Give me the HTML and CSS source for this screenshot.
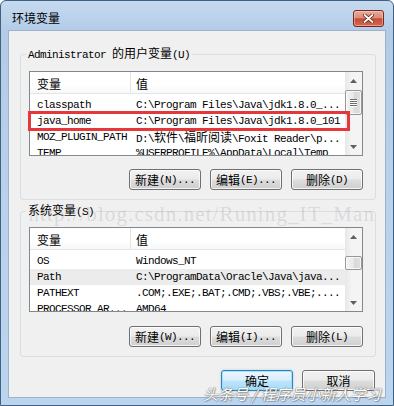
FILE: index.html
```html
<!DOCTYPE html>
<html>
<head>
<meta charset="utf-8">
<link rel="stylesheet" href="styles.css">
</head>
<body>
<div class="window">
  <div class="titlebar">
    <span class="title">环境变量</span>
    <div class="close">
      <svg width="11" height="9" viewBox="0 0 11 9">
        <path d="M1.5 1 L9.5 8 M9.5 1 L1.5 8" stroke="#5b2016" stroke-width="3.4" stroke-linecap="round"/>
        <path d="M1.5 1 L9.5 8 M9.5 1 L1.5 8" stroke="#ffffff" stroke-width="1.8" stroke-linecap="round"/>
      </svg>
    </div>
  </div>
  <div class="client">
    <fieldset class="group g1">
      <legend><span class="m">Administrator </span>的用户变量<span class="m">(U)</span></legend>
      <div class="list">
        <div class="grid">
          <div class="head"><div class="hc h1">变量</div><div class="hc h2">值</div></div>
          <div class="rows">
            <div class="row"><div class="c1">classpath</div><div class="c2">C:\Program Files\Java\jdk1.8.0_...</div></div>
            <div class="row"><div class="c1">java_home</div><div class="c2">C:\Program Files\Java\jdk1.8.0_101</div></div>
            <div class="row"><div class="c1">MOZ_PLUGIN_PATH</div><div class="c2">D:\<span class="cj">软件</span>\<span class="cj">福昕阅读</span>\Foxit Reader\p...</div></div>
            <div class="row"><div class="c1">TEMP</div><div class="c2">%USERPROFILE%\AppData\Local\Temp</div></div>
          </div>
        </div>
        <div class="sb">
          <div class="arr"><svg width="7" height="4" viewBox="0 0 7 4"><path d="M0 4 L3.5 0 L7 4Z" fill="#606060"/></svg></div>
          <div class="track">
            <div class="thumb t1">
              <svg width="7" height="8" viewBox="0 0 7 8"><path d="M0 0.5H7M0 2.5H7M0 4.5H7M0 6.5H7" stroke="#6e6e6e" stroke-width="1"/><path d="M0 1.5H7M0 3.5H7M0 5.5H7M0 7.5H7" stroke="#fbfbfb" stroke-width="1"/></svg>
            </div>
          </div>
          <div class="arr"><svg width="7" height="4" viewBox="0 0 7 4"><path d="M0 0 L3.5 4 L7 0Z" fill="#606060"/></svg></div>
        </div>
      </div>
      <div class="btns">
        <div class="btn">新建<span class="m">(N)...</span></div>
        <div class="btn">编辑<span class="m">(E)...</span></div>
        <div class="btn">删除<span class="m">(D)</span></div>
      </div>
    </fieldset>

    <fieldset class="group g2">
      <legend>系统变量<span class="m">(S)</span></legend>
      <div class="list">
        <div class="grid">
          <div class="head"><div class="hc h1">变量</div><div class="hc h2">值</div></div>
          <div class="rows">
            <div class="row"><div class="c1">OS</div><div class="c2">Windows_NT</div></div>
            <div class="row sel"><div class="c1">Path</div><div class="c2">C:\ProgramData\Oracle\Java\java...</div></div>
            <div class="row"><div class="c1">PATHEXT</div><div class="c2">.COM;.EXE;.BAT;.CMD;.VBS;.VBE;....</div></div>
            <div class="row"><div class="c1">PROCESSOR_AR...</div><div class="c2">AMD64</div></div>
          </div>
        </div>
        <div class="sb">
          <div class="arr"><svg width="7" height="4" viewBox="0 0 7 4"><path d="M0 4 L3.5 0 L7 4Z" fill="#606060"/></svg></div>
          <div class="track">
            <div class="thumb t2"></div>
          </div>
          <div class="arr"><svg width="7" height="4" viewBox="0 0 7 4"><path d="M0 0 L3.5 4 L7 0Z" fill="#606060"/></svg></div>
        </div>
      </div>
      <div class="btns b2">
        <div class="btn">新建<span class="m">(W)...</span></div>
        <div class="btn">编辑<span class="m">(I)...</span></div>
        <div class="btn">删除<span class="m">(L)</span></div>
      </div>
    </fieldset>

    <div class="dlg">
      <div class="btn default">确定</div>
      <div class="btn cancel">取消</div>
    </div>
  </div>

  <div class="redbox"></div>
  <div class="wm1">http://blog.csdn.net/Runing_IT_Man</div>
  <div class="wm2">头条号 / 程序员小新人学习</div>
</div>
</body>
</html>
```

FILE: styles.css
```css
* { box-sizing: border-box; }

body {
  margin: 0;
  background: #ffffff;
}

.window {
  position: relative;
  width: 394px;
  height: 406px;
  display: flex;
  flex-direction: column;
  padding: 0 7px 7px;
  border: 1px solid #3f6186;
  border-radius: 6px 6px 0 0;
  background: linear-gradient(180deg, #c6daef 0, #b3cbe7 30px, #b9d1ec 200px, #bcd5ef 100%);
  font-family: "Noto Sans CJK SC", sans-serif;
  font-size: 12px;
  color: #000;
  overflow: hidden;
}

.titlebar {
  height: 29px;
  display: flex;
  align-items: flex-start;
}

.title {
  padding: 9px 0 0 4px;
  line-height: 16px;
  font-size: 12px;
}

.close {
  margin: 9px 2px 0 auto;
  width: 31px;
  height: 17px;
  border: 1px solid #74291e;
  border-radius: 3px;
  background: linear-gradient(180deg, #eaab9d 0%, #de8a77 45%, #c84b34 52%, #d26a4f 100%);
  box-shadow: inset 0 0 0 1px rgba(255, 220, 210, 0.45);
  display: flex;
  align-items: center;
  justify-content: center;
}

.client {
  flex: 1;
  background: #f0f0f0;
  border: 1px solid #9cb2cc;
  display: flex;
  flex-direction: column;
}

.group {
  margin: 15px 9px 0 11px;
  padding: 9px 12px 9px 8px;
  border: 1px solid #d5dfe5;
  border-radius: 3px;
  min-width: 0;
}

.g2 {
  margin-top: 3px;
  padding-top: 8px;
}

legend {
  margin-left: -3px;
  padding: 0 2px;
  line-height: 14px;
  font-size: 12px;
}

.m {
  font-family: "Liberation Mono", monospace;
  font-size: 11px;
  letter-spacing: -0.6px;
}

.list {
  height: 85px;
  border: 1px solid #828790;
  background: #ffffff;
  display: flex;
}

.grid {
  flex: 1;
  min-width: 0;
  overflow: hidden;
}

.head {
  height: 22px;
  display: flex;
  border-bottom: 1px solid #e5e5e5;
  background: linear-gradient(180deg, #ffffff 0%, #ffffff 60%, #f7f8f9 100%);
}

.hc {
  padding-top: 2px;
  line-height: 20px;
  font-size: 12px;
}

.h1 {
  width: 101px;
  padding-left: 7px;
  border-right: 1px solid #e3e3e3;
}

.h2 {
  padding-left: 5px;
}

.rows {
  padding-top: 3px;
}

.row {
  display: flex;
  height: 16px;
  line-height: 16px;
  white-space: nowrap;
  font-family: "Liberation Mono", "Noto Sans CJK SC", monospace;
  font-size: 11px;
  letter-spacing: -0.6px;
}

.row.sel {
  background: #ececec;
}

.c1 {
  width: 101px;
  flex: none;
  padding-left: 7px;
  overflow: hidden;
}

.c2 {
  flex: 1;
  padding-left: 5px;
  overflow: hidden;
}

.cj {
  font-family: "Noto Sans CJK SC", sans-serif;
  font-size: 12px;
  letter-spacing: 0;
}

.sb {
  width: 17px;
  flex: none;
  display: flex;
  flex-direction: column;
  background: linear-gradient(90deg, #e7e7e9 0%, #f4f4f5 40%, #f4f4f5 100%);
}

.arr {
  height: 17px;
  flex: none;
  display: flex;
  align-items: center;
  justify-content: center;
}

.track {
  flex: 1;
}

.thumb {
  margin: 1px 0 0 0;
  width: 17px;
  border: 1px solid #979797;
  border-radius: 2px;
  background: linear-gradient(90deg, #f4f4f4 0%, #e8e8e8 50%, #d8d8d8 51%, #e0e0e0 100%);
  box-shadow: inset 0 0 0 1px rgba(255, 255, 255, 0.7);
  display: flex;
  align-items: center;
  justify-content: center;
}

.t1 { height: 25px; }
.t2 { height: 14px; margin-top: 11px; }

.btns {
  display: flex;
  justify-content: flex-end;
  gap: 9px;
  margin-top: 13px;
}

.b2 { margin-top: 14px; }

.btn {
  width: 72px;
  height: 21px;
  border: 1px solid #707070;
  border-radius: 3px;
  background: linear-gradient(180deg, #f2f2f2 0%, #ebebeb 48%, #dddddd 52%, #cfcfcf 100%);
  box-shadow: inset 0 0 0 1px rgba(255, 255, 255, 0.75);
  display: flex;
  align-items: center;
  justify-content: center;
  font-size: 12px;
  line-height: 14px;
  white-space: nowrap;
}

.dlg {
  display: flex;
  justify-content: flex-end;
  gap: 9px;
  margin-top: 13px;
  padding-right: 10px;
}

.btn.default {
  border-color: #3c7fb1;
  background: linear-gradient(180deg, #eaf6fd 0%, #d9f0fc 48%, #bee6fd 52%, #a7d9f5 100%);
  box-shadow: inset 0 0 0 1px rgba(150, 225, 255, 0.9), 0 0 2px rgba(80, 170, 230, 0.6);
}

.btn.cancel {
  width: 73px;
}

.redbox {
  position: absolute;
  left: 27px;
  top: 110px;
  width: 322px;
  height: 20px;
  border: 3px solid #e5383b;
}

.wm1 {
  position: absolute;
  top: 202px;
  right: 18px;
  font-family: "Liberation Serif", serif;
  font-size: 21px;
  line-height: 22px;
  letter-spacing: 1.1px;
  color: rgba(125, 125, 125, 0.2);
  white-space: nowrap;
}

.wm2 {
  position: absolute;
  left: 202px;
  top: 383px;
  font-family: "Noto Sans CJK SC", sans-serif;
  font-size: 15px;
  line-height: 20px;
  font-style: italic;
  color: #ffffff;
  white-space: nowrap;
  text-shadow: 0 0 1px #6e6e6e, 0 0 1px #6e6e6e, 1px 1px 1px rgba(0, 0, 0, 0.25);
}
```
